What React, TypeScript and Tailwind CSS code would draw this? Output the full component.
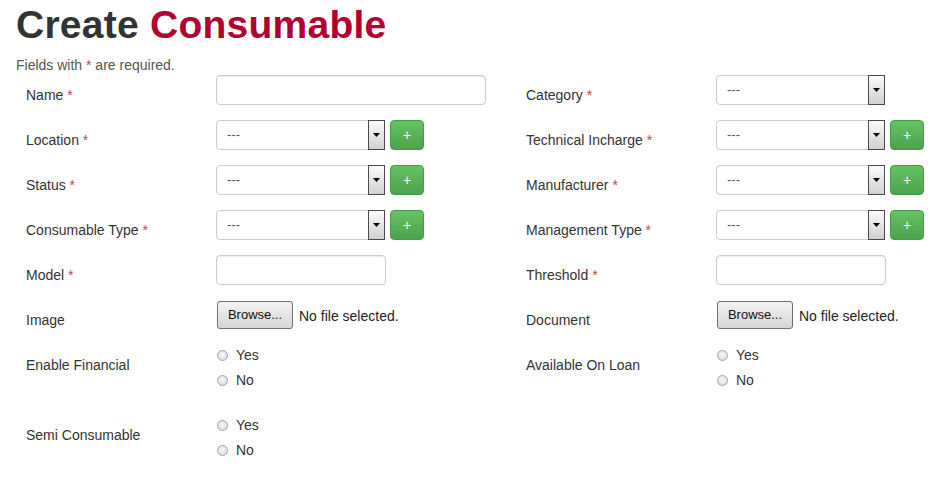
import React from 'react';

const Req = () => <span className="text-[#b94a48]">*</span>;

const Label = ({ text, required }: { text: string; required?: boolean }) => (
  <div className="w-[200px] shrink-0 pl-[10px] pt-[10px] text-[14px] leading-[20px] text-[#333]">
    {text}
    {required && (
      <>
        {' '}
        <Req />
      </>
    )}
  </div>
);

const TextInput = ({ wide }: { wide?: boolean }) => (
  <div
    className={
      wide
        ? 'h-[30px] w-[270px] rounded-[4px] border border-[#cccccc] bg-white shadow-[inset_0_1px_1px_rgba(0,0,0,0.075)]'
        : 'h-[30px] w-[170px] rounded-[4px] border border-[#cccccc] bg-white shadow-[inset_0_1px_1px_rgba(0,0,0,0.075)]'
    }
  />
);

const Select = () => (
  <div className="flex h-[30px] w-[169px] items-stretch rounded-[4px] border border-[#cccccc] bg-white">
    <div className="flex flex-1 items-center pl-[10px] text-[13px] text-[#555]">---</div>
    <div className="-my-px -mr-px flex w-[17px] items-center justify-center border border-[#4a4a4a] bg-gradient-to-b from-[#fbfbfb] to-[#d0d0d0]">
      <svg width="7" height="4" viewBox="0 0 7 4">
        <path d="M0 0h7L3.5 4z" fill="#000" />
      </svg>
    </div>
  </div>
);

const AddButton = () => (
  <div className="ml-[5px] flex h-[30px] w-[34px] items-center justify-center rounded-[4px] border border-[#449d44] bg-gradient-to-b from-[#62c462] to-[#4fa14f] text-[14px] leading-none text-white">
    +
  </div>
);

const FileInput = () => (
  <div className="mt-px flex items-center">
    <div className="ml-px flex h-[28px] w-[76px] items-center justify-center rounded-[3px] border border-[#707070] bg-gradient-to-b from-[#f3f3f3] to-[#d6d6d6] text-[13px] text-[#111]">
      Browse...
    </div>
    <span className="ml-[6px] mt-[2px] text-[14px] text-[#222]">No file selected.</span>
  </div>
);

const Radio = ({ text }: { text: string }) => (
  <div className="flex h-[20px] items-center">
    <span className="ml-px h-[11px] w-[11px] rounded-full border border-[#a4a4a4] bg-[radial-gradient(circle_at_50%_40%,#f6f6f6_0%,#d6d6d6_100%)]" />
    <span className="ml-[8px] text-[14px] leading-[20px] text-[#333]">{text}</span>
  </div>
);

const RadioGroup = () => (
  <div className="flex flex-col gap-[5px]">
    <Radio text="Yes" />
    <Radio text="No" />
  </div>
);

type Field = { label: string; required?: boolean; control: React.ReactNode } | null;

const Half = ({ field }: { field: Field }) => (
  <div className="flex">
    {field && (
      <>
        <Label text={field.label} required={field.required} />
        <div className="flex items-start">{field.control}</div>
      </>
    )}
  </div>
);

const App = () => {
  const rows: { h: string; left: Field; right: Field }[] = [
    {
      h: 'h-[45px]',
      left: { label: 'Name', required: true, control: <TextInput wide /> },
      right: { label: 'Category', required: true, control: <Select /> },
    },
    {
      h: 'h-[45px]',
      left: { label: 'Location', required: true, control: <><Select /><AddButton /></> },
      right: { label: 'Technical Incharge', required: true, control: <><Select /><AddButton /></> },
    },
    {
      h: 'h-[45px]',
      left: { label: 'Status', required: true, control: <><Select /><AddButton /></> },
      right: { label: 'Manufacturer', required: true, control: <><Select /><AddButton /></> },
    },
    {
      h: 'h-[45px]',
      left: { label: 'Consumable Type', required: true, control: <><Select /><AddButton /></> },
      right: { label: 'Management Type', required: true, control: <><Select /><AddButton /></> },
    },
    {
      h: 'h-[45px]',
      left: { label: 'Model', required: true, control: <TextInput /> },
      right: { label: 'Threshold', required: true, control: <TextInput /> },
    },
    {
      h: 'h-[45px]',
      left: { label: 'Image', control: <FileInput /> },
      right: { label: 'Document', control: <FileInput /> },
    },
    {
      h: 'h-[70px]',
      left: { label: 'Enable Financial', control: <RadioGroup /> },
      right: { label: 'Available On Loan', control: <RadioGroup /> },
    },
    {
      h: 'h-[70px]',
      left: { label: 'Semi Consumable', control: <RadioGroup /> },
      right: null,
    },
  ];

  return (
    <div className="h-[498px] w-[932px] overflow-hidden bg-white pl-[16px] font-['Liberation_Sans',Arial,sans-serif]">
      <h1 className="mt-[5px] text-[39px] font-bold leading-none tracking-[0.25px] text-[#333]">
        Create <span className="text-[#b10031]">Consumable</span>
      </h1>
      <p className="mt-[11px] text-[14px] leading-[20px] text-[#555]">
        Fields with <Req /> are required.
      </p>
      <div>
        {rows.map((row, i) => (
          <div key={i} className={`grid grid-cols-[500px_1fr] ${row.h}`}>
            <Half field={row.left} />
            <Half field={row.right} />
          </div>
        ))}
      </div>
    </div>
  );
};

export default App;
